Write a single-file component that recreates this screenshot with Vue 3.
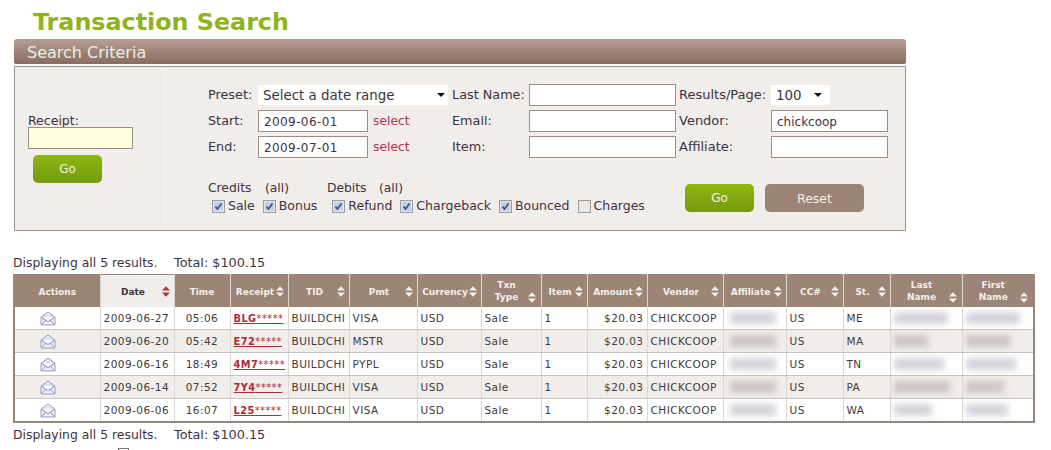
<script setup>
const columns = [
  { label: 'Actions', w: 86, plain: true },
  { label: 'Date', w: 74, active: true },
  { label: 'Time', w: 56, plain: true },
  { label: 'Receipt', w: 58 },
  { label: 'TID', w: 61 },
  { label: 'Pmt', w: 68 },
  { label: 'Currency', w: 64 },
  { label: 'Txn\nType', w: 60, two: true },
  { label: 'Item', w: 46 },
  { label: 'Amount', w: 60 },
  { label: 'Vendor', w: 76 },
  { label: 'Affiliate', w: 63 },
  { label: 'CC#', w: 57 },
  { label: 'St.', w: 47 },
  { label: 'Last\nName', w: 72, two: true },
  { label: 'First\nName', w: 72, two: true }
]
const rows = [
  { date: '2009-06-27', time: '05:06', code: 'BLG', pmt: 'VISA', st: 'ME', last: 54, first: 54 },
  { date: '2009-06-20', time: '05:42', code: 'E72', pmt: 'MSTR', st: 'MA', last: 34, first: 44 },
  { date: '2009-06-16', time: '18:49', code: '4M7', pmt: 'PYPL', st: 'TN', last: 50, first: 50 },
  { date: '2009-06-14', time: '07:52', code: '7Y4', pmt: 'VISA', st: 'PA', last: 56, first: 38 },
  { date: '2009-06-06', time: '16:07', code: 'L25', pmt: 'VISA', st: 'WA', last: 38, first: 42 }
]
const checks = [
  { label: 'Sale', on: true },
  { label: 'Bonus', on: true, wide: true },
  { label: 'Refund', on: true },
  { label: 'Chargeback', on: true },
  { label: 'Bounced', on: true },
  { label: 'Charges', on: false }
]
</script>

<template>
  <div class="page">
    <h1 class="title">Transaction Search</h1>
    <div class="bar">Search Criteria</div>
    <form class="panel" @submit.prevent>
      <div class="left">
        <label class="receipt-label" for="receipt">Receipt:</label>
        <input id="receipt" class="field receipt" type="text" />
        <button class="btn go go-left" type="button">Go</button>
      </div>
      <div class="right">
        <div class="grid">
          <span>Preset:</span>
          <div class="select preset">Select a date range</div>
          <span>Last Name:</span>
          <input class="field" type="text" />
          <span class="third">Results/Page:</span>
          <div class="select perpage">100</div>

          <span>Start:</span>
          <input class="field date" type="text" value="2009-06-01" />
          <a class="pick">select</a>
          <span>Email:</span>
          <input class="field" type="text" />
          <span class="third">Vendor:</span>
          <input class="field" type="text" value="chickcoop" />

          <span>End:</span>
          <input class="field date" type="text" value="2009-07-01" />
          <a class="pick">select</a>
          <span>Item:</span>
          <input class="field" type="text" />
          <span class="third">Affiliate:</span>
          <input class="field" type="text" />
        </div>
        <div class="lower">
          <div class="filters">
            <div class="groups">
              <span class="g1">Credits</span><span class="g2">(all)</span>
              <span class="g1 debits">Debits</span><span class="g2">(all)</span>
            </div>
            <div class="checks">
              <label v-for="c in checks" :key="c.label" class="check" :class="{ wide: c.wide }">
                <svg width="13" height="13" viewBox="0 0 13 13">
                  <rect x="0.5" y="0.5" width="12" height="12" fill="#e4e6ea" stroke="#9a9ca2" />
                  <rect x="2" y="2" width="9" height="9" :fill="c.on ? '#c3cfe6' : '#ebe9e6'" />
                  <path v-if="c.on" d="M3.5 6.5 L5.5 9 L9.5 3.5" fill="none" stroke="#3a4c86" stroke-width="1.6" />
                </svg>
                <span>{{ c.label }}</span>
              </label>
            </div>
          </div>
          <div class="actions">
            <button class="btn go" type="button">Go</button>
            <button class="btn reset" type="button">Reset</button>
          </div>
        </div>
      </div>
    </form>

    <p class="summary first-summary"><span class="count">Displaying all 5 results.</span><span class="total">Total: $100.15</span></p>

    <table class="results">
      <colgroup>
        <col v-for="c in columns" :key="c.label" :style="{ width: c.w + 'px' }" />
      </colgroup>
      <thead>
        <tr>
          <th v-for="c in columns" :key="c.label" :class="{ active: c.active }">
            <div class="th" :class="{ plain: c.plain, two: c.two }">
              <span class="th-label">{{ c.label }}</span>
              <svg v-if="!c.plain" class="sort" width="8" height="11" viewBox="0 0 9 12">
                <path d="M4.5 0 L9 5 H0 Z M0 7 H9 L4.5 12 Z" />
              </svg>
            </div>
          </th>
        </tr>
      </thead>
      <tbody>
        <tr v-for="r in rows" :key="r.date">
          <td class="icon-cell">
            <svg width="16" height="15" viewBox="0 0 16 15">
              <path d="M1 6.2 L8 1 L15 6.2 V14 H1 Z" fill="#ececf6" stroke="#9a9cc4" stroke-linejoin="round" />
              <path d="M3.5 5 H12.5 V8.5 L8 11 L3.5 8.5 Z" fill="#fafafd" stroke="#c2c4dc" stroke-width="0.7" />
              <path d="M1 6.2 L8 10.5 L15 6.2 M1 14 L6 9 M15 14 L10 9" fill="none" stroke="#9a9cc4" />
            </svg>
          </td>
          <td>{{ r.date }}</td>
          <td class="center">{{ r.time }}</td>
          <td class="receipt-cell"><a><b>{{ r.code }}</b>*****</a></td>
          <td>BUILDCHI</td>
          <td>{{ r.pmt }}</td>
          <td>USD</td>
          <td>Sale</td>
          <td>1</td>
          <td class="amount">$20.03</td>
          <td>CHICKCOOP</td>
          <td><span class="blur mid" style="width: 46px"></span></td>
          <td>US</td>
          <td>{{ r.st }}</td>
          <td><span class="blur" :style="{ width: r.last + 'px' }"></span></td>
          <td><span class="blur" :style="{ width: r.first + 'px' }"></span></td>
        </tr>
      </tbody>
    </table>

    <p class="summary last-summary"><span class="count">Displaying all 5 results.</span><span class="total">Total: $100.15</span></p>
    <div class="tail"><span class="tail-box"></span></div>
  </div>
</template>

<style>
html, body { margin: 0; overflow: hidden; background: #fff; }
</style>

<style scoped>
.page {
  width: 1051px;
  height: 450px;
  overflow: hidden;
  font-family: "DejaVu Sans", Verdana, sans-serif;
  color: #3f3340;
  font-size: 12.3px;
}
.title {
  margin: 0;
  padding: 8px 0 0 33px;
  height: 39px;
  box-sizing: border-box;
  font-size: 23.8px;
  line-height: 29px;
  font-weight: 700;
  color: #8fb31c;
  white-space: nowrap;
}
.bar {
  margin-left: 14px;
  width: 892px;
  height: 25px;
  box-sizing: border-box;
  padding-left: 13px;
  border-radius: 3px 3px 2px 2px;
  background: linear-gradient(#b79e92, #876c60);
  color: #f0ece8;
  font-size: 16px;
  line-height: 27px;
}
.panel {
  display: flex;
  margin: 2px 0 0 14px;
  width: 892px;
  height: 165px;
  box-sizing: border-box;
  border: 1px solid #99928c;
  background: #f1edea;
}
.left {
  width: 146px;
  flex: none;
  box-sizing: border-box;
  padding: 47px 0 0 13px;
  border-right: 1px dotted #e8e3df;
  display: flex;
  flex-direction: column;
  align-items: flex-start;
}
.receipt-label { line-height: 13px; font-size: 12.5px; }
.field {
  box-sizing: border-box;
  width: 100%;
  height: 22px;
  margin: 0;
  padding: 1px 5px 0;
  border: 1px solid #a08c80;
  background: #fff;
  font: 12px "DejaVu Sans", Verdana, sans-serif;
  color: #3f3340;
  outline: none;
}
.date { letter-spacing: 0.4px; }
.receipt { width: 105px; background: #ffffdd; }
.btn {
  border: 0;
  border-radius: 5px;
  color: #f1f1e4;
  font: 12px "DejaVu Sans", Verdana, sans-serif;
  height: 28px;
  padding: 0;
}
.go { width: 69px; background: linear-gradient(#8fb80f, #7ea50e 60%, #769c10); }
.go-left { margin: 6px 0 0 5px; }
.reset { width: 99px; background: #9c8477; font-size: 12.5px; }
.right {
  flex: 1;
  padding: 17px 0 0 47px;
  min-width: 0;
}
.grid {
  display: grid;
  grid-template-columns: 50px 110px 84px 77px 147px 95px 117px;
  grid-auto-rows: 22px;
  row-gap: 4px;
  align-items: center;
  white-space: nowrap;
  line-height: 24px;
  font-size: 12.8px;
}
.third { padding-left: 3px; font-size: 13px; }
.pick { padding-left: 5px; color: #b62f55; font-size: 12.3px; }
.select {
  position: relative;
  height: 20px;
  line-height: 22px;
  background: #fff;
  padding-left: 5px;
  box-sizing: border-box;
  color: #3f3340;
  font-size: 13.4px;
}
.select::after {
  content: "";
  position: absolute;
  right: 3px;
  top: 8px;
  border: 4px solid transparent;
  border-top-color: #111;
  border-bottom: 0;
}
.preset { grid-column: span 2; width: 190px; }
.perpage { width: 59px; }
.perpage::after { right: 8px; }
.lower {
  display: flex;
  margin-top: 23px;
}
.filters { width: 477px; flex: none; }
.groups { line-height: 15px; white-space: pre; }
.g1 { display: inline-block; width: 57px; }
.g2 { display: inline-block; width: 62px; }
.debits { width: 52px; }
.checks {
  display: flex;
  margin: 1px 0 0 4px;
  white-space: nowrap;
  font-size: 12.5px;
}
.check {
  display: flex;
  align-items: center;
  gap: 3px;
  margin-right: 8px;
  line-height: 18px;
}
.check.wide { margin-right: 15px; }
.actions { display: flex; gap: 11px; margin-top: 3px; }
.summary {
  margin: 0;
  padding-left: 13px;
  display: flex;
  line-height: 16px;
  white-space: nowrap;
}
.count { width: 161px; font-size: 12.4px; }
.total { font-size: 12.8px; }
.first-summary { margin-top: 24px; margin-bottom: 3px; }
.last-summary { margin-top: 4px; }
.results {
  margin-left: 13px;
  width: 1021px;
  table-layout: fixed;
  border-collapse: collapse;
  border: 2px solid #9c8476;
  border-top: 0;
  font-size: 10.5px;
  letter-spacing: 0.45px;
  color: #3f3a3a;
}
th {
  height: 33px;
  padding: 2px 0 0;
  box-sizing: border-box;
  background: #9c8476;
  color: #f4f0ec;
  font-size: 9px;
  font-weight: 700;
  letter-spacing: 0;
  border-right: 1px solid #dcd6d1;
}
th:last-child { border-right: 0; }
th.active { background: #f1edea; color: #3f3340; box-shadow: inset 0 1px #9c8476; }
th.active .sort { fill: #a83a40; }
.th {
  display: flex;
  align-items: center;
  justify-content: space-between;
  padding: 0 4px 0 4px;
  box-sizing: border-box;
  line-height: 12px;
}
.th.plain { justify-content: center; padding: 0; }
.th.two { align-items: flex-end; padding: 0 5px 1px 4px; }
.th-label { flex: 1; text-align: center; min-width: 0; white-space: pre-line; }
.sort { fill: #f4f0ec; flex: none; }
td {
  height: 22px;
  padding: 0 0 0 3px;
  border-right: 1px solid #dcd8d5;
  border-bottom: 1px solid #c8c3bf;
  white-space: nowrap;
  overflow: hidden;
}
td:last-child { border-right: 0; }
tbody tr:nth-child(even) td { background: #f1edea; }
tbody tr:last-child td { border-bottom: 0; }
.center { text-align: center; padding: 0; }
.icon-cell { padding: 0 0 0 25px; }
.icon-cell svg { display: block; }
.receipt-cell a { color: #b02a35; text-decoration: underline; font-size: 9.8px; }
.amount { text-align: right; padding-right: 3px; }
.blur {
  display: block;
  height: 12px;
  background: #d4d4dc;
  filter: blur(3px);
}
tbody tr:nth-child(even) .blur { background: #cfc5c2; }
.mid { margin-left: 3px; }
.tail { padding: 5px 0 0 118px; }
.tail-box {
  display: block;
  width: 11px;
  height: 11px;
  border: 1px solid #777;
  box-sizing: border-box;
}
</style>
